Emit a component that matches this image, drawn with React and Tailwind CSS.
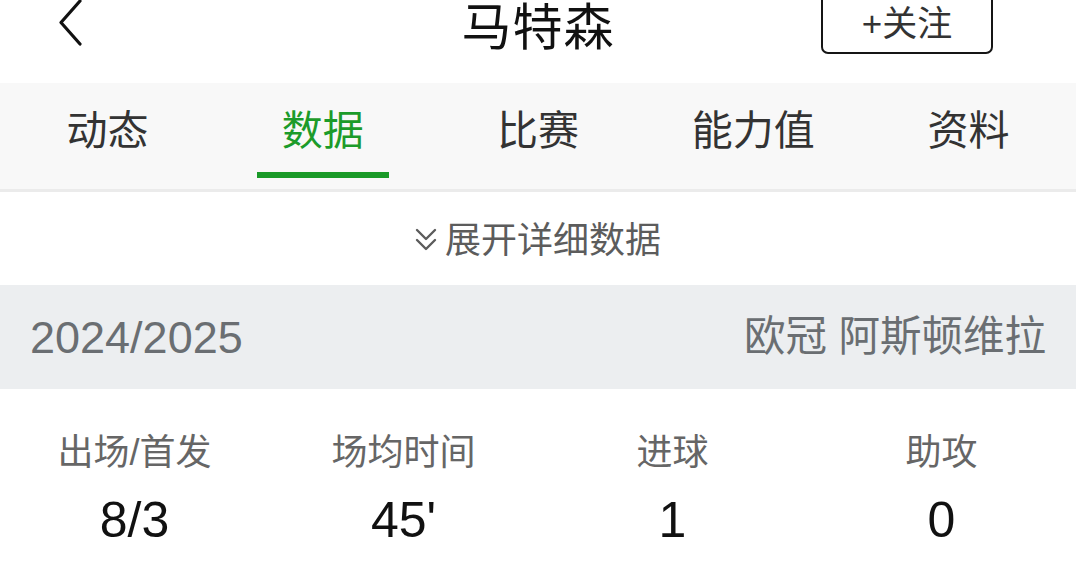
import React from 'react';

const tabs = ['动态', '数据', '比赛', '能力值', '资料'];
const stats = [
  { label: '出场/首发', value: '8/3' },
  { label: '场均时间', value: "45'" },
  { label: '进球', value: '1' },
  { label: '助攻', value: '0' },
];

const font = "font-['Liberation_Sans','Noto_Sans_CJK_SC',sans-serif]";

export default function App() {
  const active = 1;

  return (
    <div className={`w-[1076px] h-[568px] overflow-hidden bg-white ${font}`}>
      {/* header */}
      <div className="h-[83px] grid grid-cols-[1fr_auto_1fr] items-start">
        <div className="pl-[58px]">
          <svg width="26" height="46" viewBox="0 0 26 46" fill="none">
            <path d="M22 1 L3 22.5 L22 44" stroke="#111" strokeWidth="3.2" strokeLinecap="round" strokeLinejoin="round" />
          </svg>
        </div>
        <div className="pt-[4px] h-[52px] flex items-center text-[50px] leading-none text-[#111] tracking-[1px]">马特森</div>
        <div className="flex justify-end pr-[83px]">
          <div className="-mt-[14px] h-[68px] w-[172px] border-[2.5px] border-[#151515] rounded-[7px] flex items-center justify-center pt-[7px] text-[35px] leading-none text-[#333]">
            +关注
          </div>
        </div>
      </div>

      {/* tabs */}
      <div className="h-[109px] bg-[#f8f8f8] border-b-[3px] border-[#ebebeb] grid grid-cols-5">
        {tabs.map((t, i) => (
          <div key={t} className="relative flex items-center justify-center pb-[10px]">
            <span className={`text-[41px] leading-none ${i === active ? 'text-[#1c9b2a]' : 'text-[#333]'}`}>{t}</span>
            {i === active && (
              <div className="absolute bottom-[11px] left-1/2 -translate-x-1/2 w-[132px] h-[6px] bg-[#1a9a28]" />
            )}
          </div>
        ))}
      </div>

      {/* expand */}
      <div className="h-[93px] flex items-center justify-center gap-[8px] pt-[5px] text-[#5c5c5c]">
        <svg width="22" height="26" viewBox="0 0 22 26" fill="none" className="mt-[-2px]">
          <path d="M2 3 L11 12 L20 3" stroke="#5c5c5c" strokeWidth="2.4" strokeLinecap="round" strokeLinejoin="round" />
          <path d="M2 13 L11 22 L20 13" stroke="#5c5c5c" strokeWidth="2.4" strokeLinecap="round" strokeLinejoin="round" />
        </svg>
        <span className="text-[36px] leading-none">展开详细数据</span>
      </div>

      {/* season */}
      <div className="h-[104px] bg-[#eceef0] flex items-center justify-between px-[30px] text-[#6a6e72]">
        <span className="text-[45px] leading-none">2024/2025</span>
        <span className="text-[41.5px] leading-none">欧冠 阿斯顿维拉</span>
      </div>

      {/* stats */}
      <div className="grid grid-cols-4 pt-[46px]">
        {stats.map((s) => (
          <div key={s.label} className="flex flex-col items-center">
            <span className="text-[36px] leading-none text-[#666]">{s.label}</span>
            <span className="mt-[24px] text-[50px] leading-none text-[#111]">{s.value}</span>
          </div>
        ))}
      </div>
    </div>
  );
}
